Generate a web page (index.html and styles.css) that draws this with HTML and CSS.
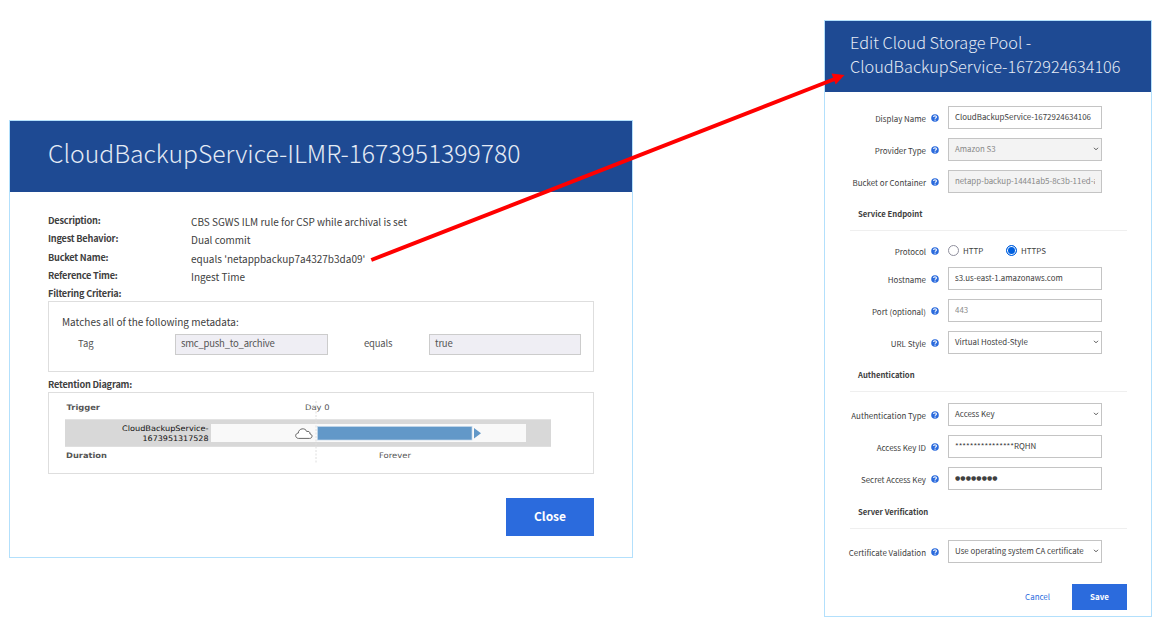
FILE: index.html
```
<!DOCTYPE html>
<html lang="en">
<head>
    <meta charset="UTF-8">
    <meta name="viewport" content="width=device-width, initial-scale=1.0">
    <title>Cloud Storage Pool</title>
    <link rel="stylesheet" href="styles.css">
</head>
<body>
    <svg width="0" height="0" class="defs">
        <symbol id="help" viewBox="0 0 16 16">
            <circle cx="8" cy="8" r="7.6" fill="#2b6bdd"/>
            <path d="M5.2 6.2c0-3.6 5.6-3.4 5.6-.2 0 1.9-2.6 1.9-2.6 3.6" fill="none" stroke="#fff" stroke-width="2.3"/>
            <circle cx="8.1" cy="12.2" r="1.4" fill="#fff"/>
        </symbol>
        <symbol id="chevron" viewBox="0 0 6 4">
            <path d="M1 .8l2 2 2-2" fill="none" stroke="currentColor" stroke-width="1"/>
        </symbol>
    </svg>

    <div class="dialog rule">
        <h1 class="dialog-title">CloudBackupService-ILMR-1673951399780</h1>
        <div class="rule-body">
            <dl class="details">
                <dt>Description:</dt><dd>CBS SGWS ILM rule for CSP while archival is set</dd>
                <dt>Ingest Behavior:</dt><dd>Dual commit</dd>
                <dt>Bucket Name:</dt><dd>equals 'netappbackup7a4327b3da09'</dd>
                <dt>Reference Time:</dt><dd>Ingest Time</dd>
                <dt>Filtering Criteria:</dt><dd></dd>
            </dl>
            <div class="box criteria">
                <p class="matches">Matches all of the following metadata:</p>
                <div class="filter">
                    <span class="tag">Tag</span>
                    <span class="value">smc_push_to_archive</span>
                    <span class="operator">equals</span>
                    <span class="value">true</span>
                </div>
            </div>
            <h2 class="box-title">Retention Diagram:</h2>
            <div class="box">
                <svg class="diagram" width="544" height="80" viewBox="49 393 544 80">
                    <rect x="65" y="419.3" width="486" height="27.5" fill="#d8d8d8"/>
                    <rect x="211" y="424" width="315" height="18" fill="#f9f9f9"/>
                    <path d="M316 401v63" stroke="#dedede" stroke-dasharray="2 1.5"/>
                    <rect x="317.5" y="426.5" width="154.5" height="13.5" fill="#6298c8" stroke="#c3d8ea" stroke-width=".7"/>
                    <path d="M474 428v10.6l7-5.3z" fill="#6298c8"/>
                    <path d="M298.5 438.4c-3.7-.3-3.7-5.1-.2-5.3.2-5 7.1-5.7 8.4-1.6 2.1-.6 3.5.6 3.3 2.5 3 .5 2.5 4.3-.3 4.4z" fill="#fff" stroke="#555" stroke-width=".9"/>
                    <text class="diagram-head" x="66.5" y="410.3" textLength="33.5" lengthAdjust="spacingAndGlyphs">Trigger</text>
                    <text class="diagram-head" x="66" y="457.8" textLength="41" lengthAdjust="spacingAndGlyphs">Duration</text>
                    <text class="diagram-label" x="305" y="410.3" textLength="24.5" lengthAdjust="spacingAndGlyphs">Day 0</text>
                    <text class="diagram-label" x="379" y="457.8" textLength="32" lengthAdjust="spacingAndGlyphs">Forever</text>
                    <text class="diagram-pool" x="122" y="431" textLength="86.5" lengthAdjust="spacingAndGlyphs">CloudBackupService-</text>
                    <text class="diagram-pool" x="142.5" y="441" textLength="66" lengthAdjust="spacingAndGlyphs">1673951317528</text>
                </svg>
            </div>
            <button class="close">Close</button>
        </div>
    </div>

    <div class="dialog pool">
        <h1 class="dialog-title">Edit Cloud Storage Pool -<br>CloudBackupService-1672924634106</h1>
        <form class="pool-form">
            <div class="row">
                <label>Display Name</label><svg class="help"><use href="#help"/></svg>
                <input class="field" value="CloudBackupService-1672924634106">
            </div>
            <div class="row">
                <label>Provider Type</label><svg class="help"><use href="#help"/></svg>
                <div class="field select disabled">Amazon S3<svg class="chevron"><use href="#chevron"/></svg></div>
            </div>
            <div class="row">
                <label>Bucket or Container</label><svg class="help"><use href="#help"/></svg>
                <input class="field disabled" value="netapp-backup-14441ab5-8c3b-11ed-a" readonly>
            </div>

            <h3>Service Endpoint</h3>
            <div class="row protocol">
                <label>Protocol</label><svg class="help"><use href="#help"/></svg>
                <span class="radio"></span><span class="option">HTTP</span>
                <span class="radio checked"></span><span class="option">HTTPS</span>
            </div>
            <div class="row">
                <label>Hostname</label><svg class="help"><use href="#help"/></svg>
                <input class="field" value="s3.us-east-1.amazonaws.com">
            </div>
            <div class="row">
                <label>Port (optional)</label><svg class="help"><use href="#help"/></svg>
                <input class="field" placeholder="443">
            </div>
            <div class="row">
                <label>URL Style</label><svg class="help"><use href="#help"/></svg>
                <div class="field select">Virtual Hosted-Style<svg class="chevron"><use href="#chevron"/></svg></div>
            </div>

            <h3>Authentication</h3>
            <div class="row first">
                <label>Authentication Type</label><svg class="help"><use href="#help"/></svg>
                <div class="field select">Access Key<svg class="chevron"><use href="#chevron"/></svg></div>
            </div>
            <div class="row">
                <label>Access Key ID</label><svg class="help"><use href="#help"/></svg>
                <input class="field" value="****************RQHN">
            </div>
            <div class="row">
                <label>Secret Access Key</label><svg class="help"><use href="#help"/></svg>
                <input class="field secret" value="●●●●●●●●">
            </div>

            <h3 class="verification">Server Verification</h3>
            <div class="row first">
                <label>Certificate Validation</label><svg class="help"><use href="#help"/></svg>
                <div class="field select">Use operating system CA certificate<svg class="chevron"><use href="#chevron"/></svg></div>
            </div>
            <div class="actions">
                <a class="cancel">Cancel</a>
                <button class="save" type="button">Save</button>
            </div>
        </form>
    </div>

    <!-- arrow from the bucket name to the storage pool -->
    <svg class="arrow" width="1158" height="622">
        <path d="M371.3 260L836 78.5" stroke="#f00" stroke-width="4"/>
        <path d="M844.5 75l-13-1.4 4.2 11z" fill="#f00"/>
    </svg>
</body>
</html>
```

FILE: styles.css
```
* {
    box-sizing: border-box;
}
body {
    margin: 0;
    padding: 20px 0 0 9px;
    height: 622px;
    overflow: hidden;
    display: flex;
    align-items: flex-start;
    background-color: #fff;
    color: #404040;
    font-family: "Noto Sans CJK SC", "Noto Sans", sans-serif;
}
.defs {
    position: absolute;
}
h1, h2, h3, p, dl, dd {
    margin: 0;
}
button {
    border: 0;
    padding: 0 0 2px;
    color: #fff;
    background-color: #2b6bdd;
    font-family: inherit;
    font-weight: bold;
}
.dialog {
    border: 1px solid #b3e0fc;
}
.dialog-title {
    height: 71px;
    background-color: #1e4a93;
    color: #e4ebf5;
    font-weight: 300;
}

/* ILM rule */
.rule {
    width: 624px;
    height: 438px;
    margin-top: 100px;
}
.rule .dialog-title {
    padding-left: 38px;
    font-size: 24.7px;
    line-height: 63px;
}
.rule-body {
    padding: 19px 38px 0 38px;
    display: flex;
    flex-direction: column;
}
.details {
    display: grid;
    grid-template-columns: 143px 1fr;
    grid-auto-rows: 18.3px;
    height: 90px;
    font-size: 10px;
    line-height: 18.3px;
}
dt,
.box-title {
    font-size: 9.2px;
    font-weight: bold;
    letter-spacing: -0.22px;
}
dd {
    padding-top: 2px;
}
.box {
    border: 1px solid #dedede;
}
.criteria {
    height: 71px;
    padding: 11px 12px 0 13px;
}
.matches {
    font-size: 10px;
    line-height: 18px;
}
.filter {
    display: grid;
    grid-template-columns: 97px 153px 101px 152px;
    padding-left: 16px;
    margin-top: 3px;
    font-size: 9.5px;
    line-height: 19px;
    color: #555;
}
.value {
    border: 1px solid #ccc;
    background-color: #efeef4;
    padding-left: 5px;
    line-height: 17px;
    height: 21px;
    letter-spacing: -0.2px;
}
.operator {
    padding-left: 36px;
    letter-spacing: -0.2px;
}
.box-title {
    height: 20px;
    line-height: 24px;
}
.diagram {
    display: block;
    font-family: "DejaVu Sans", sans-serif;
    font-size: 7.6px;
    text-rendering: geometricPrecision;
}
.diagram-head {
    fill: #555;
    font-weight: bold;
}
.diagram-label {
    fill: #555;
}
.diagram-pool {
    fill: #111;
}
.close {
    align-self: flex-end;
    width: 88px;
    height: 38px;
    margin-top: 24px;
    padding-bottom: 3px;
    font-size: 12px;
}

/* storage pool */
.pool {
    width: 328px;
    height: 597px;
    margin-left: 191px;
}
.pool .dialog-title {
    padding: 10px 0 0 25px;
    font-size: 16.25px;
    line-height: 23.5px;
}
.pool-form {
    padding: 9px 24px 0 25px;
    font-size: 7.95px;
}
.row {
    display: flex;
    align-items: center;
    height: 32px;
}
.row label {
    display: flex;
    justify-content: flex-end;
    width: 76px;
    padding-top: 3px;
    white-space: nowrap;
}
.help {
    width: 8px;
    height: 8px;
    margin: 2px 9px 0 5px;
}
.field {
    width: 154px;
    height: 23px;
    padding: 0 6px 2px 6px;
    border: 1px solid #c4c4c4;
    background-color: #fff;
    color: #404040;
    font-family: inherit;
    font-size: 7.9px;
}
.field::placeholder {
    color: #8c8c8c;
}
.select {
    display: flex;
    align-items: center;
    justify-content: space-between;
    padding-right: 2px;
    white-space: nowrap;
}
.chevron {
    width: 6px;
    height: 4px;
    margin-top: 2px;
    color: #555;
}
.disabled {
    background-color: #f3f3f3;
    color: #888;
}
.secret {
    font-family: "DejaVu Sans", sans-serif;
    font-size: 6px;
    letter-spacing: 0.1px;
}
h3 {
    height: 34px;
    padding-left: 8px;
    border-bottom: 1px solid #efefef;
    font-size: 7.7px;
    line-height: 34px;
}
.verification {
    margin-top: 1px;
}
.first {
    margin-top: 6px;
}
.protocol {
    height: 24px;
    margin-top: 7px;
}
.radio {
    width: 11px;
    height: 11px;
    border: 1px solid #8f8f9d;
    border-radius: 50%;
}
.checked {
    border-color: #0060df;
    background-color: #0060df;
    box-shadow: inset 0 0 0 1px #fff;
}
.option {
    width: 47px;
    padding-left: 4px;
}
.actions {
    display: flex;
    justify-content: flex-end;
    align-items: center;
    margin-top: 17px;
}
.cancel {
    color: #2b6bdd;
    margin-right: 22px;
    padding-bottom: 1px;
}
.save {
    width: 55px;
    height: 26px;
    font-size: 8px;
}

/* overlay */
.arrow {
    position: absolute;
    left: 0;
    top: 0;
}
```
